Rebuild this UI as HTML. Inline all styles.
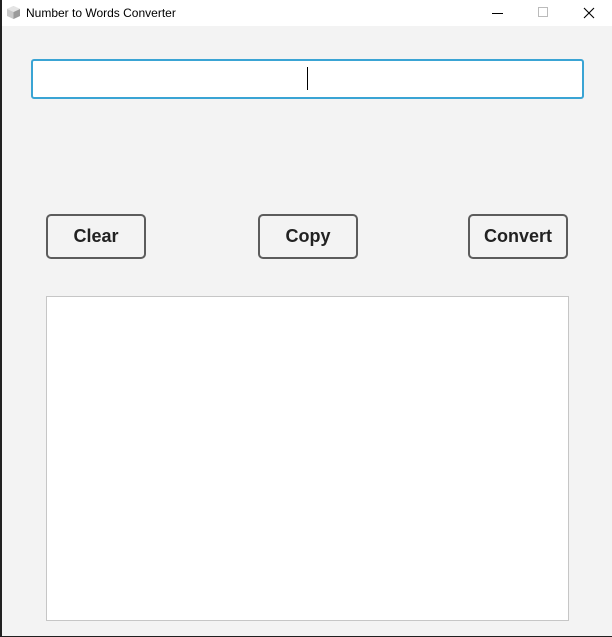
<!DOCTYPE html>
<html><head><style>
*{margin:0;padding:0;box-sizing:border-box}
body{width:612px;height:637px;background:#202020;position:relative;overflow:hidden;font-family:"Liberation Sans",sans-serif}
.win{position:absolute;left:2px;top:0;width:610px;height:636px;background:#f3f3f3}
.title{position:absolute;left:0;top:0;width:610px;height:26px;background:#fff}
.title span{position:absolute;left:24px;top:6px;font-size:12px;color:#000}
.input{position:absolute;left:29px;top:59px;width:553px;height:40px;background:#fff;border:2px solid #3aa4d4;border-radius:3px}
.cursor{position:absolute;left:305px;top:67px;width:1px;height:23px;background:#000}
.btn{position:absolute;top:214px;width:100px;height:45px;border:2px solid #5c5c5c;border-radius:5px;font-weight:bold;font-size:18px;color:#222;text-align:center;line-height:41px}
.area{position:absolute;left:44px;top:296px;width:523px;height:325px;background:#fff;border:1px solid #c6c6c6}
</style></head><body>
<div class="win">
<div class="title">
<svg style="position:absolute;left:4px;top:5px" width="15" height="15" viewBox="0 0 15 15"><path d="M7.5 1L14 4v7l-6.5 3L1 11V4z" fill="#c8c8c8"/><path d="M7.5 7L14 4v7l-6.5 3z" fill="#9a9a9a"/><path d="M1 4l6.5-3L14 4 7.5 7z" fill="#e4e4e4"/></svg>
<span>Number to Words Converter</span>
<div style="position:absolute;left:490px;top:13px;width:11px;height:1px;background:#000"></div>
<div style="position:absolute;left:536px;top:7px;width:10px;height:10px;border:1px solid #bbb"></div>
<svg style="position:absolute;left:581px;top:7px" width="12" height="12"><path d="M1 1L11 11M11 1L1 11" stroke="#000" stroke-width="1.1"/></svg>
</div>
<div class="input"></div>
<div class="cursor"></div>
<div class="btn" style="left:44px">Clear</div>
<div class="btn" style="left:256px">Copy</div>
<div class="btn" style="left:466px">Convert</div>
<div class="area"></div>
</div>
</body></html>
